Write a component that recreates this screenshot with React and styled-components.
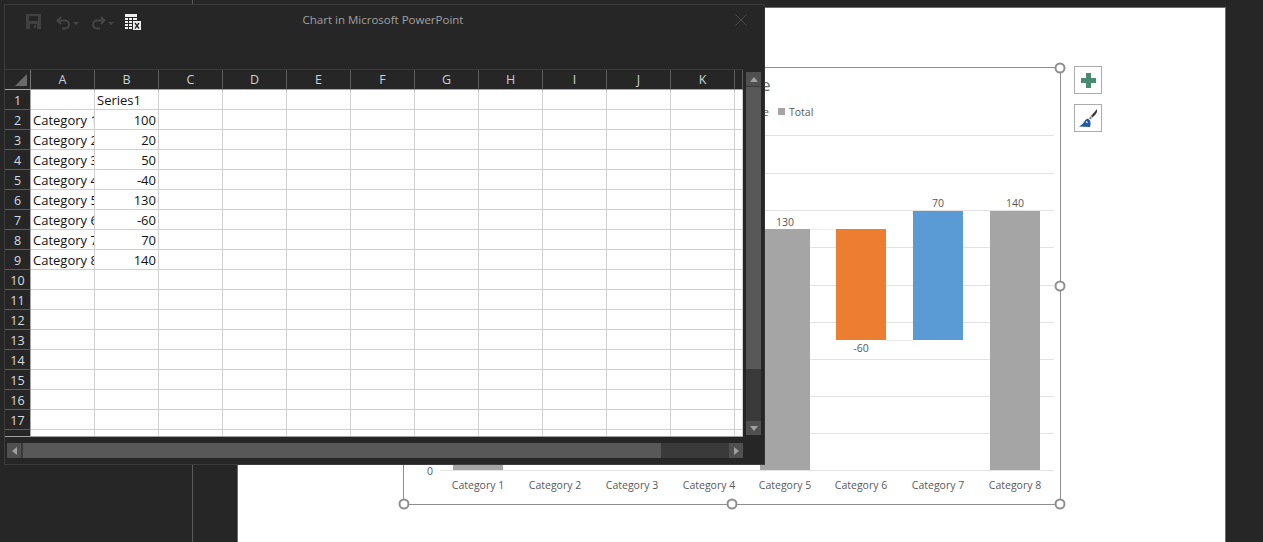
import React from 'react';
import styled, { createGlobalStyle } from 'styled-components';

const GlobalStyle = createGlobalStyle`
  html, body {
    margin: 0;
    padding: 0;
    height: 100%;
    overflow: hidden;
    background: #262626;
  }
  body {
    font-family: "Open Sans", "Noto Sans", sans-serif;
  }
`;

const Desktop = styled.div`
  position: relative;
  display: flex;
  width: 100%;
  height: 100vh;
  overflow: hidden;
  background: #262626;
`;

const ThumbRail = styled.div`
  flex: 0 0 193px;
  box-sizing: border-box;
  border-right: 1px solid #5a5a5a;
`;

const Stage = styled.div`
  flex: 1;
  display: flex;
  padding: 7px 37px 0 44px;
`;

const Slide = styled.div`
  flex: 1;
  box-sizing: border-box;
  display: flex;
  align-items: flex-start;
  gap: 13px;
  padding: 59px 0 0 165px;
  margin-bottom: -2px;
  background: #fff;
  border: 1px solid #6e6e6e;
`;

const ChartFrame = styled.div`
  position: relative;
  width: 658px;
  height: 438px;
  box-sizing: border-box;
  border: 1px solid #8e8e8e;
`;

const Handle = styled.span`
  position: absolute;
  left: ${(p) => p.$x}%;
  top: ${(p) => p.$y}%;
  width: 11px;
  height: 11px;
  box-sizing: border-box;
  transform: translate(-50%, -50%);
  background: #fff;
  border: 2px solid #8e8e8e;
  border-radius: 50%;
`;

const ChartSvg = styled.svg`
  display: block;
  position: absolute;
  left: -1px;
  top: 0;
  font-family: "Open Sans", "Noto Sans", sans-serif;
  font-size: 10.5px;
  fill: #595959;
`;

const ChartTools = styled.div`
  display: flex;
  flex-direction: column;
  gap: 10px;
  margin-top: -1px;
`;

const ToolButton = styled.button`
  width: 28px;
  height: 28px;
  padding: 0;
  display: flex;
  align-items: center;
  justify-content: center;
  background: #fff;
  border: 1px solid #ababab;
`;

const ExcelWindow = styled.div`
  position: absolute;
  left: 4px;
  top: 4px;
  width: 761px;
  height: 461px;
  box-sizing: border-box;
  display: flex;
  flex-direction: column;
  background: #262626;
  border: 1px solid #3c3c3c;
  border-right-color: #333;
`;

const TitleBar = styled.div`
  position: relative;
  height: 64px;
  flex: none;
  box-sizing: border-box;
  padding: 9px 0 0 21px;
  display: flex;
  align-items: flex-start;
  gap: 8px;
`;

const WindowTitle = styled.div`
  position: absolute;
  left: 0;
  right: 3px;
  top: 6px;
  text-align: center;
  font-size: 11.5px;
  line-height: 17px;
  color: #a0a0a0;
`;

const CloseMark = styled.svg`
  position: absolute;
  right: 17px;
  top: 9px;
`;

const ToolGroup = styled.div`
  display: flex;
  align-items: center;
  gap: 2px;
  height: 16px;
  margin-left: ${(p) => p.$gap || 0}px;
`;

const Caret = styled.span`
  width: 0;
  height: 0;
  margin-top: 2px;
  border-left: 3px solid transparent;
  border-right: 3px solid transparent;
  border-top: 3px solid #454545;
`;

const SheetArea = styled.div`
  position: relative;
  flex: 1;
  min-height: 0;
`;

const SheetGrid = styled.div`
  display: grid;
  grid-template-columns: 26px repeat(11, 64px) 8px;
  grid-auto-rows: 20px;
  width: 738px;
  height: 366px;
  overflow: hidden;
  border-top: 1px solid #3c3c3c;
  border-bottom: 1px solid #a0a0a0;
  font-size: 13px;
  line-height: 19px;
`;

const Corner = styled.div`
  position: relative;
  height: 19px;
  background: #262626;
  border-right: 1px solid #777;
  border-bottom: 1px solid #a6a6a6;

  &::after {
    content: '';
    position: absolute;
    right: 3px;
    bottom: 3px;
    width: 0;
    height: 0;
    border-left: 12px solid transparent;
    border-bottom: 12px solid #6a6a6a;
  }
`;

const ColHead = styled.div`
  background: #262626;
  color: #c9d3d8;
  font-size: 12.5px;
  text-align: center;
  border-right: 1px solid #5c5c5c;
  border-bottom: 1px solid #a6a6a6;
  height: 19px;
`;

const RowHead = styled.div`
  box-sizing: border-box;
  padding-top: 1px;
  background: #262626;
  color: #d4dde2;
  font-size: 12.5px;
  text-align: center;
  border-right: 1px solid #a6a6a6;
  border-bottom: 1px solid #5c5c5c;
`;

const Cell = styled.div`
  box-sizing: border-box;
  height: 20px;
  padding: 1px 2px 0;
  background: #fff;
  color: #111;
  white-space: nowrap;
  overflow: hidden;
  text-align: ${(p) => (p.$num ? 'right' : 'left')};
  border-right: 1px solid #d0d0d0;
  border-bottom: 1px solid #d0d0d0;
`;

const VScroll = styled.div`
  position: absolute;
  left: 741px;
  top: 3px;
  width: 15px;
  height: 363px;
  display: flex;
  flex-direction: column;
  gap: 1px;
  background: #3a3a3a;
`;

const HScroll = styled.div`
  position: absolute;
  left: 2px;
  bottom: 6px;
  width: 736px;
  height: 15px;
  display: flex;
  gap: 2px;
  background: #3a3a3a;
`;

const ScrollButton = styled.div`
  flex: 0 0 14px;
  display: flex;
  align-items: center;
  justify-content: center;
  background: #505050;
`;

const ScrollThumb = styled.div`
  flex: ${(p) => p.$size};
  background: #585858;
`;

const Spacer = styled.div`
  flex: 1;
`;

const Arrow = styled.span`
  width: 0;
  height: 0;
  border: 4px solid transparent;
  ${(p) => p.$dir === 'up' && 'border-bottom: 5px solid #a0a0a0; border-top: 0;'}
  ${(p) => p.$dir === 'down' && 'border-top: 5px solid #a0a0a0; border-bottom: 0;'}
  ${(p) => p.$dir === 'left' && 'border-right: 5px solid #a0a0a0; border-left: 0;'}
  ${(p) => p.$dir === 'right' && 'border-left: 5px solid #a0a0a0; border-right: 0;'}
`;

const columns = ['A', 'B', 'C', 'D', 'E', 'F', 'G', 'H', 'I', 'J', 'K'];
const sheetData = [
  ['', 'Series1'],
  ['Category 1', 100],
  ['Category 2', 20],
  ['Category 3', 50],
  ['Category 4', -40],
  ['Category 5', 130],
  ['Category 6', -60],
  ['Category 7', 70],
  ['Category 8', 140],
];

// svg origin sits at x 403, y 68 on the page
const bars = [
  { x: 50, top: 396, bottom: 402, color: '#a5a5a5' },
  { x: 357, top: 161, bottom: 402, color: '#a5a5a5', label: '130', ly: 158 },
  { x: 433, top: 161, bottom: 272, color: '#ed7d31', label: '-60', ly: 284 },
  { x: 510, top: 143, bottom: 272, color: '#5b9bd5', label: '70', ly: 139 },
  { x: 587, top: 143, bottom: 402, color: '#a5a5a5', label: '140', ly: 139 },
];
const gridY = [67, 105, 142, 179, 217, 254, 291, 328, 365, 402];
const categories = [75, 152, 229, 306, 382, 458, 535, 612];

const Chart = () => (
  <ChartSvg width="660" height="440" viewBox="0 0 660 440">
    <text x="358" y="23" fontSize="17" fill="#6e6e6e">e</text>
    <text x="360" y="48">e</text>
    <rect x="375" y="40" width="7" height="7" fill="#a5a5a5" />
    <text x="386" y="48">Total</text>
    {gridY.map((y) => (
      <line key={y} x1="37" x2="651" y1={y + 0.5} y2={y + 0.5} stroke="#e2e2e2" />
    ))}
    <line x1="407" x2="433" y1="161.5" y2="161.5" stroke="#ececec" />
    <line x1="483" x2="510" y1="272.5" y2="272.5" stroke="#ececec" />
    {bars.map((b) => (
      <g key={b.x}>
        <rect x={b.x} y={b.top} width="50" height={b.bottom - b.top} fill={b.color} />
        {b.label && <text x={b.x + 25} y={b.ly} textAnchor="middle">{b.label}</text>}
      </g>
    ))}
    <text x="27" y="407" textAnchor="middle">0</text>
    {categories.map((x, i) => (
      <text key={x} x={x} y="421" textAnchor="middle">{`Category ${i + 1}`}</text>
    ))}
  </ChartSvg>
);

const SaveIcon = () => (
  <svg width="15" height="15" viewBox="0 0 15 15">
    <path d="M0 0h15v15H0z" fill="#404040" />
    <path d="M3 2h9v5H3zM4 10h7v5H4z" fill="#262626" />
    <path d="M8 11h2v3H8z" fill="#404040" />
  </svg>
);

const UndoIcon = ({ flip }) => (
  <svg width="15" height="15" viewBox="0 0 15 15" style={flip ? { transform: 'scaleX(-1)' } : undefined}>
    <path d="M5 2 1.500 5.500 5 9M2 5.500h7a4 4 0 0 1 0 8H6" fill="none" stroke="#454545" strokeWidth="2" />
  </svg>
);

const TableIcon = () => (
  <svg width="16" height="16" viewBox="0 0 16 16">
    <path d="M0 0h12v3H0z" fill="#eee" />
    <path d="M0 4h3v2H0zM4 4h3v2H4zM8 4h4v2H8zM0 7h3v2H0zM4 7h3v2H4zM0 10h3v2H0zM4 10h3v2H4zM0 13h3v2H0zM4 13h3v2H4z" fill="#eee" />
    <path d="M8 7h8v9H8z" fill="#eee" />
    <path d="m10 9 4 5.500m0-5.500-4 5.500" stroke="#262626" strokeWidth="1.300" />
  </svg>
);

const PlusIcon = () => (
  <svg width="15" height="15" viewBox="0 0 15 15">
    <path d="M5 0h5v5h5v5h-5v5H5v-5H0V5h5z" fill="#4a8a70" />
  </svg>
);

const BrushIcon = () => (
  <svg width="19" height="18" viewBox="0 0 19 18">
    <path d="M18 0v3l-1.500 2.500-3 3-1.500-1.500z" fill="#3c3c3c" />
    <path d="m11.500 7.500-1.500 1.500 1.500 1.500 1.500-1.500z" fill="#777" />
    <path d="M9 9.500c-2 .5-3 1.500-4 3.500-1 1.500-3 3.500-5 4.500l11 .5c.5-1.500 1-3.500 0-6.500z" fill="#1f5a9e" />
    <path d="M7 12.500c1-.5 2 .5 1.500 1.500S6.500 13 7 12.500z" fill="#fff" />
  </svg>
);

const handles = [
  [0, 0], [50, 0], [100, 0],
  [0, 50], [100, 50],
  [0, 100], [50, 100], [100, 100],
];

const App = () => (
  <>
    <GlobalStyle />
    <Desktop>
      <ThumbRail />
      <Stage>
        <Slide>
          <ChartFrame>
            <Chart />
            {handles.map(([x, y]) => (
              <Handle key={`${x}-${y}`} $x={x} $y={y} />
            ))}
          </ChartFrame>
          <ChartTools>
            <ToolButton><PlusIcon /></ToolButton>
            <ToolButton><BrushIcon /></ToolButton>
          </ChartTools>
        </Slide>
      </Stage>

      <ExcelWindow>
        <TitleBar>
          <SaveIcon />
          <ToolGroup $gap={7}><UndoIcon /><Caret /></ToolGroup>
          <ToolGroup $gap={4}><UndoIcon flip /><Caret /></ToolGroup>
          <ToolGroup $gap={3}><TableIcon /></ToolGroup>
          <WindowTitle>Chart in Microsoft PowerPoint</WindowTitle>
          <CloseMark width="12" height="12" viewBox="0 0 12 12">
            <path d="m.5.5 11 11m0-11-11 11" stroke="#4a4a4a" />
          </CloseMark>
        </TitleBar>
        <SheetArea>
          <SheetGrid>
            <Corner />
            {columns.map((c) => <ColHead key={c}>{c}</ColHead>)}
            <ColHead />
            {Array.from({ length: 18 }, (_, r) => (
              <React.Fragment key={r}>
                <RowHead>{r < 17 ? r + 1 : ''}</RowHead>
                {columns.map((c, i) => {
                  const value = sheetData[r] ? sheetData[r][i] : undefined;
                  return <Cell key={c} $num={typeof value === 'number'}>{value}</Cell>;
                })}
                <Cell />
              </React.Fragment>
            ))}
          </SheetGrid>
          <VScroll>
            <ScrollButton><Arrow $dir="up" /></ScrollButton>
            <ScrollThumb $size="0 0 282px" />
            <Spacer />
            <ScrollButton><Arrow $dir="down" /></ScrollButton>
          </VScroll>
          <HScroll>
            <ScrollButton><Arrow $dir="left" /></ScrollButton>
            <ScrollThumb $size="0 0 638px" />
            <Spacer />
            <ScrollButton><Arrow $dir="right" /></ScrollButton>
          </HScroll>
        </SheetArea>
      </ExcelWindow>
    </Desktop>
  </>
);

export default App;
